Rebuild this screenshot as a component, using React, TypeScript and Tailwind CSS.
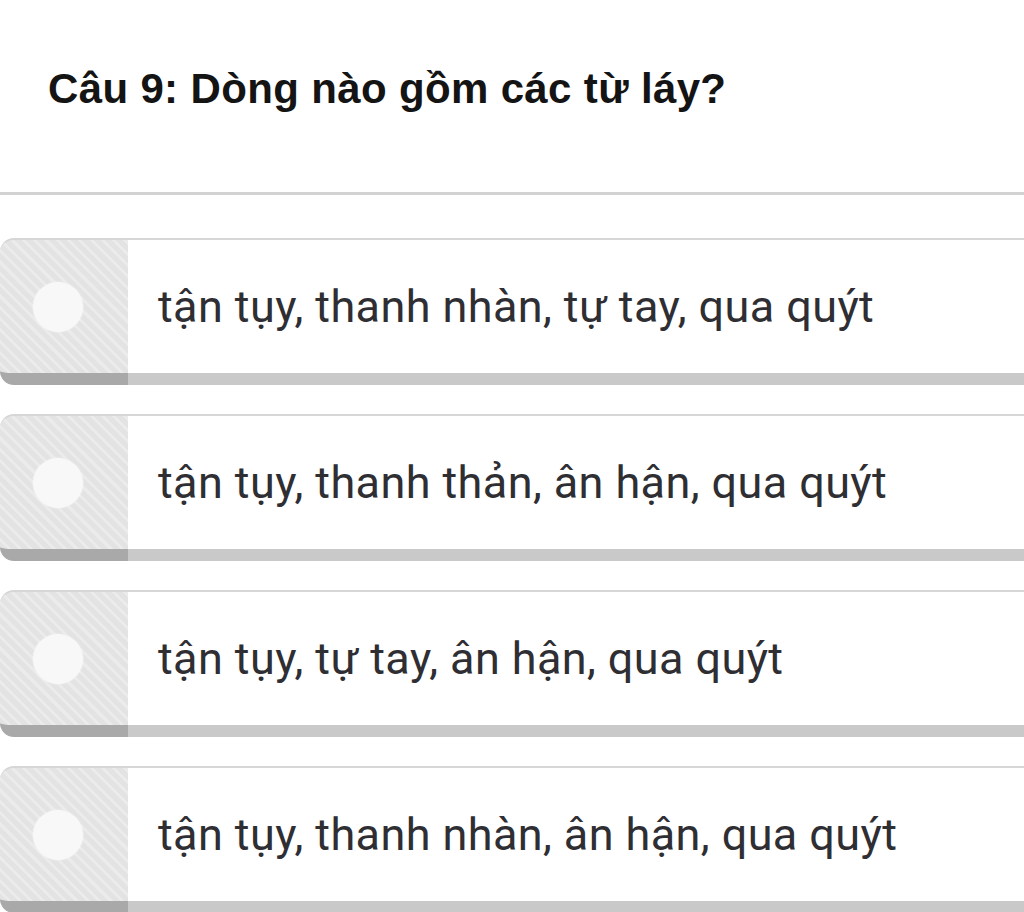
import React from "react";

const options = [
  "tận tụy, thanh nhàn, tự tay, qua quýt",
  "tận tụy, thanh thản, ân hận, qua quýt",
  "tận tụy, tự tay, ân hận, qua quýt",
  "tận tụy, thanh nhàn, ân hận, qua quýt",
];

const Option: React.FC<{ text: string }> = ({ text }) => (
  <div className="flex h-[147px] w-[1100px]">
    <div className="flex w-[128px] shrink-0 items-center rounded-l-[14px] border-t-2 border-b-[12px] border-t-[#d6d6d6] border-b-[#a9a9a9] bg-[repeating-linear-gradient(45deg,#e3e3e3_0px,#e3e3e3_5px,#ebebeb_5px,#ebebeb_8px)] pl-[33px]">
      <div className="h-[50px] w-[50px] rounded-full bg-[#f8f8f8] shadow-[0_0_2px_#f4f4f4]" />
    </div>
    <div className="flex flex-1 items-center border-t-2 border-b-[12px] border-t-[#d6d6d6] border-b-[#c9c9c9] bg-white pl-[30px]">
      <span className="font-['Roboto',sans-serif] text-[45px] tracking-[0.4px] text-[#2e2e33]">
        {text}
      </span>
    </div>
  </div>
);

export default function App() {
  return (
    <div className="h-[912px] w-[1024px] overflow-hidden bg-white">
      <div className="h-[192px] pl-[48px] pt-[57px]">
        <h1 className="font-['Liberation_Sans',Arial,sans-serif] text-[42px] font-bold tracking-[0.35px] text-[#141414]">
          Câu 9: Dòng nào gồm các từ láy?
        </h1>
      </div>
      <div className="h-[3px] bg-[#d2d2d2]" />
      <div className="flex flex-col gap-[29px] pt-[43px]">
        {options.map((o) => (
          <Option key={o} text={o} />
        ))}
      </div>
    </div>
  );
}
